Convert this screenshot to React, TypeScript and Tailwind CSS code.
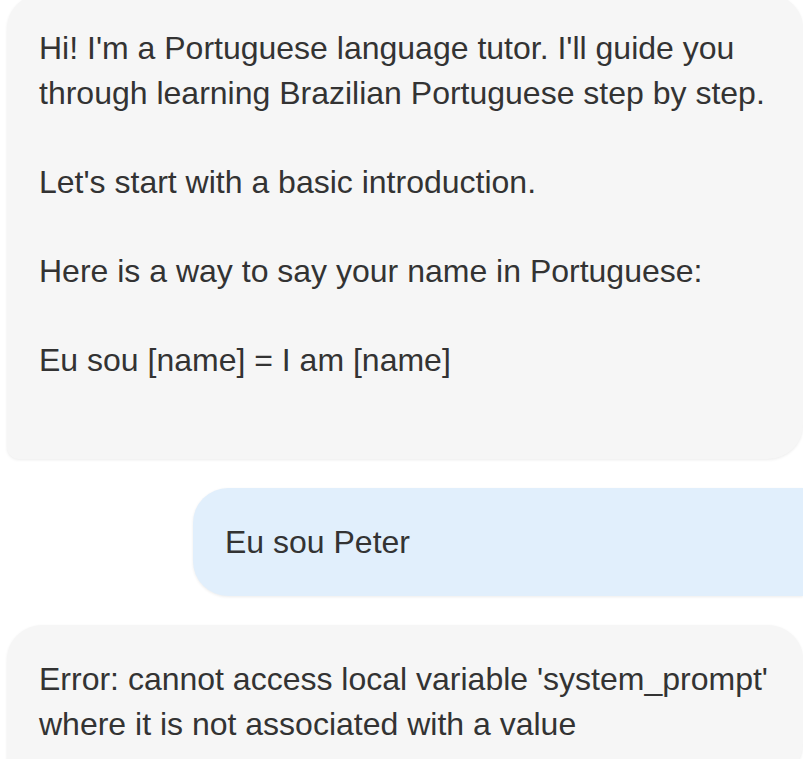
const messages = [
  {
    role: 'bot',
    text: "Hi! I'm a Portuguese language tutor. I'll guide you\nthrough learning Brazilian Portuguese step by step.\n\nLet's start with a basic introduction.\n\nHere is a way to say your name in Portuguese:\n\nEu sou [name] = I am [name]\n",
  },
  { role: 'user', text: 'Eu sou Peter' },
  {
    role: 'bot',
    text: "Error: cannot access local variable 'system_prompt'\nwhere it is not associated with a value",
  },
];

function Lines({ text }: { text: string }) {
  return (
    <>
      {text.split('\n').map((line, i) => (
        <div key={i} className="min-h-[44.5px] whitespace-nowrap">
          {line}
        </div>
      ))}
    </>
  );
}

export default function App() {
  return (
    <div className="h-[759px] w-[803px] overflow-hidden bg-white font-['Liberation_Sans',Arial,sans-serif] text-[32px] leading-[44.5px] text-[#333333]">
      <div className="-mt-[6px] flex flex-col gap-[29px] pl-[7px]">
        {messages.map((m, i) =>
          m.role === 'user' ? (
            <div key={i} className="flex justify-end">
              <div className="w-[610px] rounded-l-[35px] bg-[#e1effc] px-8 py-8 shadow-[0_1px_3px_rgba(0,0,0,0.08)]">
                <Lines text={m.text} />
              </div>
            </div>
          ) : (
            <div
              key={i}
              className="rounded-[35px] rounded-bl-[12px] bg-[#f6f6f6] px-8 py-8 shadow-[0_1px_3px_rgba(0,0,0,0.08)]"
            >
              <Lines text={m.text} />
            </div>
          )
        )}
      </div>
    </div>
  );
}
